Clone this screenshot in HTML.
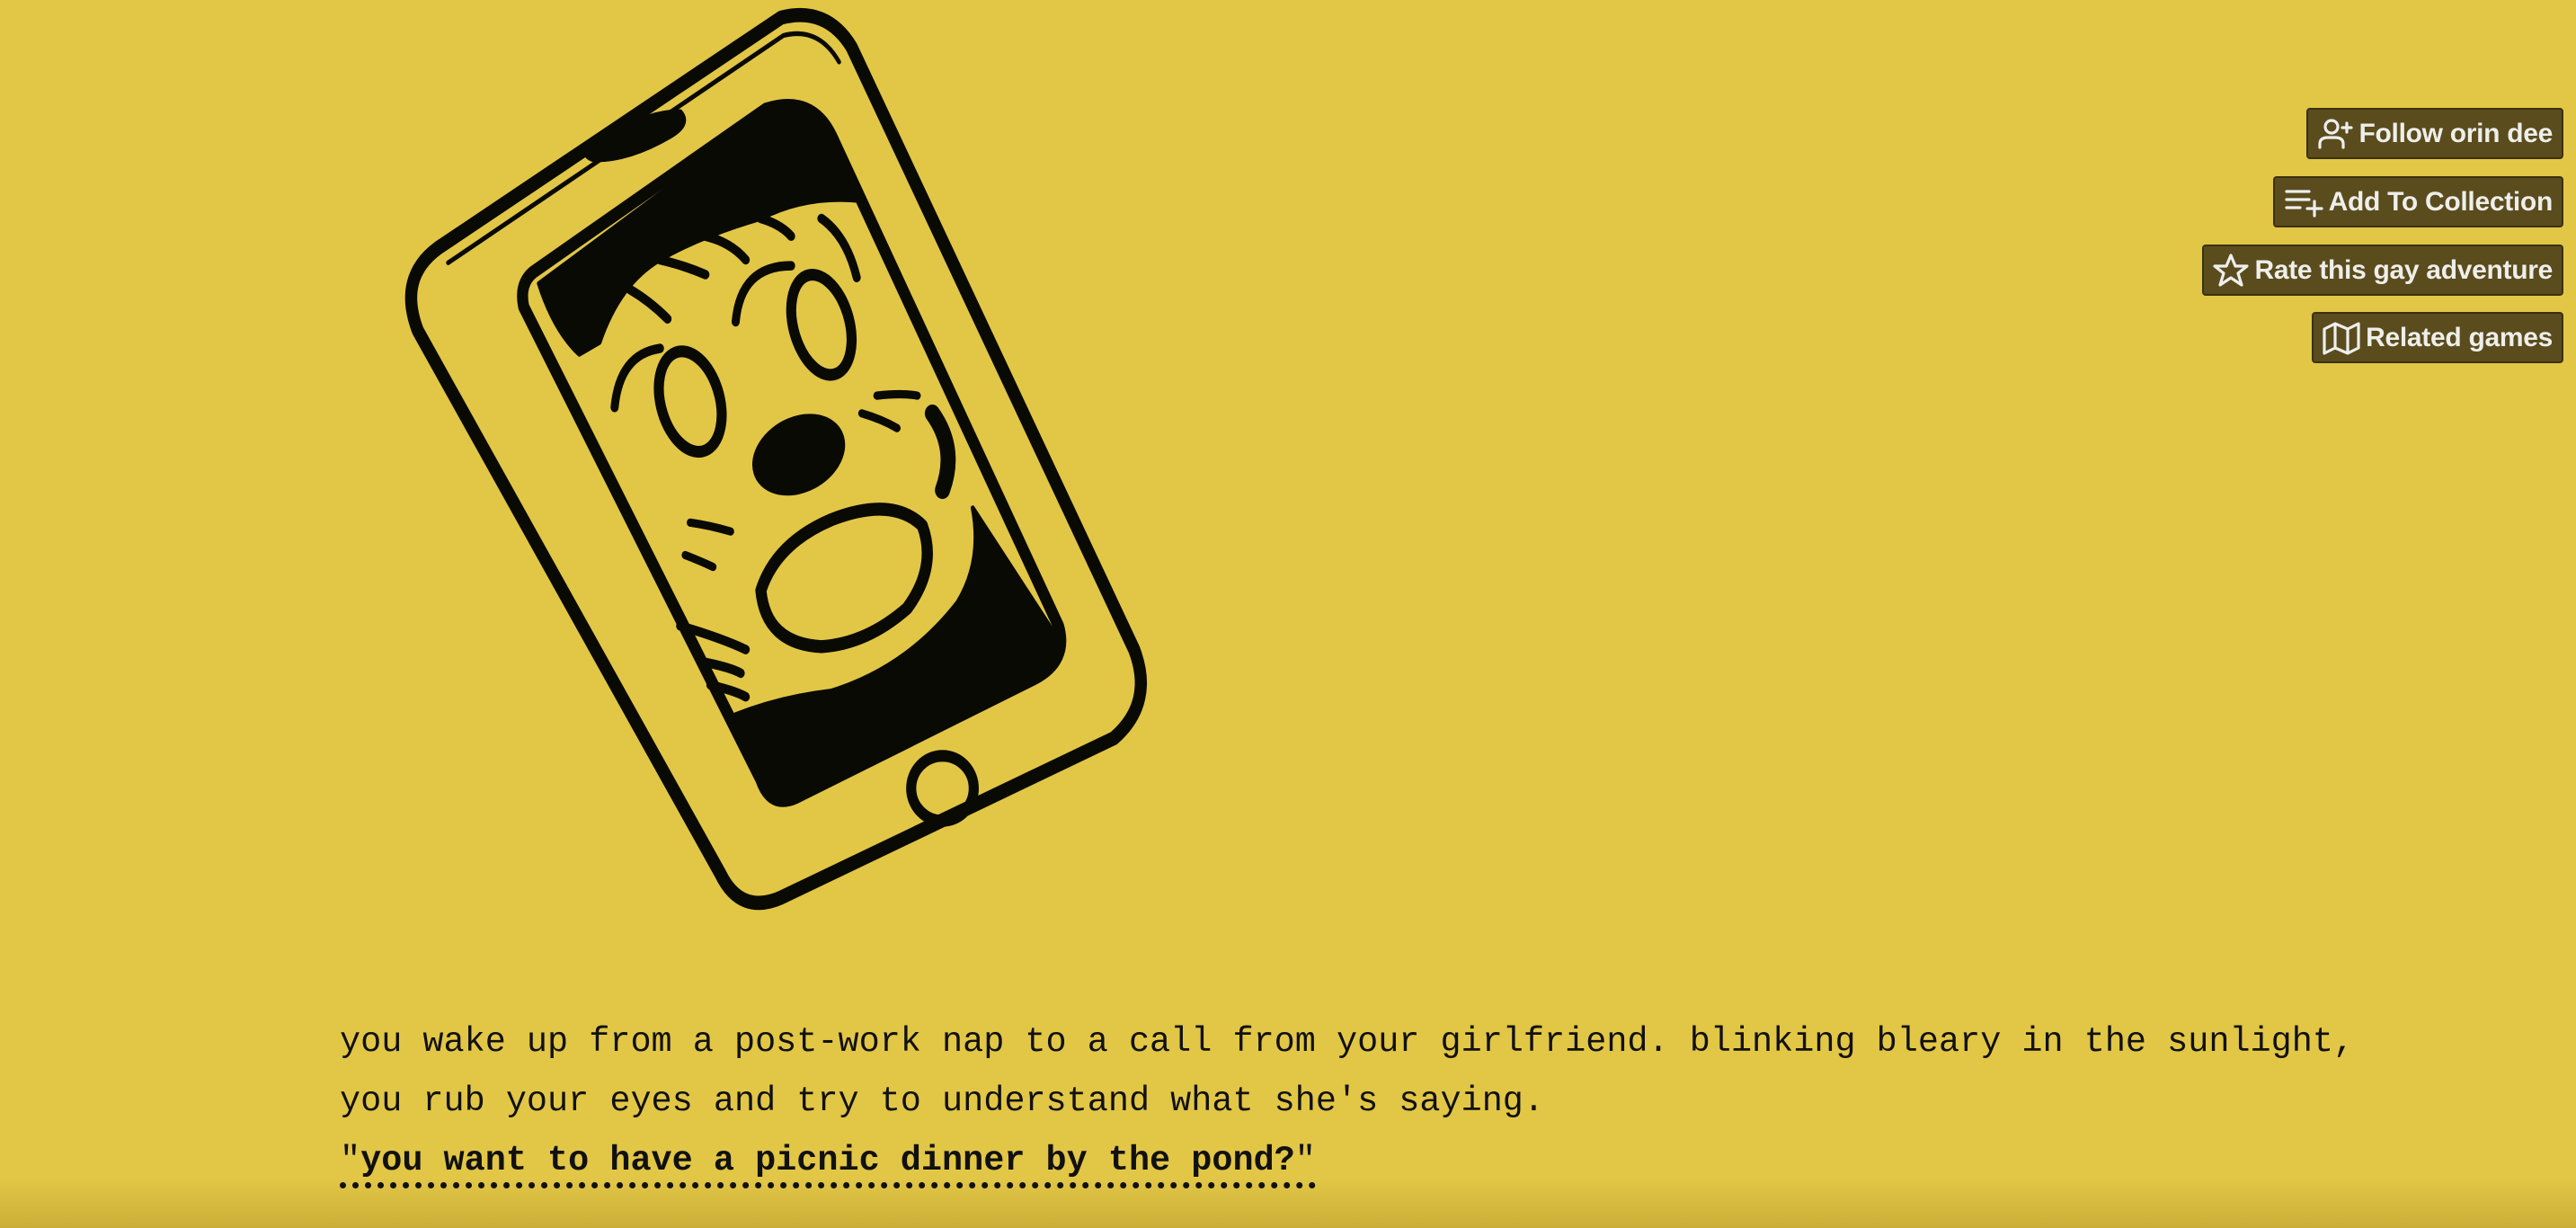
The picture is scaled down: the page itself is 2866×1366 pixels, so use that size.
<!DOCTYPE html>
<html><head><meta charset="utf-8">
<style>
html,body{margin:0;padding:0;}
body{width:2866px;height:1366px;overflow:hidden;background:#e2c646;position:relative;font-family:"Liberation Sans",sans-serif;}
.shade{position:absolute;left:0;right:0;bottom:0;height:55px;background:linear-gradient(to bottom,rgba(160,130,30,0),rgba(160,130,30,0.35));}
.btn{position:absolute;right:14px;height:53px;background:#5a4c1d;border:2px solid #3b310f;border-radius:4px;color:#eeeeea;font-weight:bold;font-size:30px;line-height:53px;padding:0 10px 0 10px;box-sizing:content-box;white-space:nowrap;display:flex;align-items:center;gap:6px;letter-spacing:-0.3px}
.btn svg{flex:none}
.txt{position:absolute;left:378px;top:1126px;font-family:"Liberation Mono",monospace;font-size:38.5px;line-height:66px;color:#111;white-space:pre;}
.q{border-bottom:7px dotted #111;padding-bottom:2px}
</style></head><body>
<div class="shade"></div>

<svg style="position:absolute;left:420px;top:0" width="880" height="1030" viewBox="0 0 1568 1568" preserveAspectRatio="none" fill="none" stroke="#0a0a05" stroke-linecap="round" stroke-linejoin="round">
<path d="M120,420 L800,30 Q890,10 940,80 L1500,1100 Q1540,1190 1460,1250 L800,1520 Q720,1550 680,1480 L80,560 Q40,470 120,420 Z" stroke-width="24"/>
<path d="M140,445 L805,60 Q875,45 915,105" stroke-width="8"/>
<path d="M310,460 L770,185 Q860,160 900,230 L1350,1060 Q1370,1120 1300,1150 L830,1350 Q780,1370 760,1320 L290,520 Q280,480 310,460 Z" stroke-width="22"/>
<path d="M430,250 Q520,190 600,190 Q620,210 580,230 Q500,270 430,270 Q400,262 430,250 Z" fill="#0a0a05" stroke-width="10"/>
<path d="M320,480 L770,195 Q860,170 900,240 L960,340 Q850,330 760,370 Q640,400 560,440 Q480,480 440,580 L400,600 Q350,560 320,480 Z" fill="#0a0a05" stroke-width="8"/>
<path d="M1180,860 L1340,1070 Q1360,1120 1300,1145 L830,1345 Q790,1360 770,1320 L710,1210 Q800,1180 900,1170 Q1050,1130 1150,1020 Q1200,950 1180,860 Z" fill="#0a0a05" stroke-width="8"/>
<path d="M1100,700 Q1150,760 1120,830" stroke-width="30"/>
<path d="M600,1060 Q680,1080 730,1100 M640,1120 Q700,1130 720,1140 M660,1160 Q710,1170 730,1180" stroke-width="16"/>
<path d="M500,490 Q540,510 575,540 M560,440 Q610,450 650,465 M650,400 Q700,410 730,440 M760,370 Q800,380 820,400 M880,370 Q930,400 950,470" stroke-width="16"/>
<ellipse cx="620" cy="680" rx="58" ry="88" transform="rotate(-20 620 680)" stroke-width="20"/>
<path d="M470,690 Q480,600 560,590" stroke-width="16"/>
<ellipse cx="880" cy="550" rx="55" ry="88" transform="rotate(-20 880 550)" stroke-width="20"/>
<path d="M710,545 Q720,450 820,450" stroke-width="16"/>
<ellipse cx="835" cy="770" rx="92" ry="62" transform="rotate(-20 835 770)" fill="#0a0a05" stroke-width="6"/>
<path d="M990,670 Q1040,665 1070,670 M960,700 Q1000,710 1030,725" stroke-width="14"/>
<path d="M620,885 Q660,890 700,900 M610,940 Q640,950 665,960" stroke-width="14"/>
<path d="M760,1000 Q790,920 900,880 Q1020,840 1080,890 Q1110,960 1050,1030 Q970,1090 880,1095 Q770,1090 760,1000 Z" stroke-width="22"/>
<ellipse cx="1120" cy="1335" rx="62" ry="55" stroke-width="20"/>
</svg>

<div class="btn" style="top:120px"><svg width="40" height="38" viewBox="0 0 40 38" fill="none" stroke="#eee" stroke-width="3.2" stroke-linecap="round"><circle cx="16" cy="11" r="7"/><path d="M3,34 V30 Q3,23 12,23 H20 Q29,23 29,30 V34"/><path d="M28,12 H38 M33,7 V17"/></svg>Follow orin dee</div>
<div class="btn" style="top:196px"><svg width="44" height="38" viewBox="0 0 44 38" fill="none" stroke="#eee" stroke-width="3.2" stroke-linecap="round"><path d="M3,7 H28 M3,16 H28 M3,25 H18 M26,26 H42 M34,18 V34"/></svg>Add To Collection</div>
<div class="btn" style="top:272px"><svg width="40" height="38" viewBox="0 0 40 38" fill="none" stroke="#eee" stroke-width="3.2" stroke-linejoin="round"><path d="M20,2 L25,14 L38,14 L28,22 L32,35 L20,27 L8,35 L12,22 L2,14 L15,14 Z"/></svg>Rate this gay adventure</div>
<div class="btn" style="top:347px"><svg width="42" height="40" viewBox="0 0 42 40" fill="none" stroke="#eee" stroke-width="3.2" stroke-linejoin="round"><path d="M2,10 L14,4 L28,10 L40,4 V31 L28,37 L14,31 L2,37 Z M14,4 V31 M28,10 V37"/></svg>Related games</div>

<div class="txt">you wake up from a post-work nap to a call from your girlfriend. blinking bleary in the sunlight,
you rub your eyes and try to understand what she's saying.
<span class="q">"<b>you want to have a picnic dinner by the pond?</b>"</span></div>
</body></html>
